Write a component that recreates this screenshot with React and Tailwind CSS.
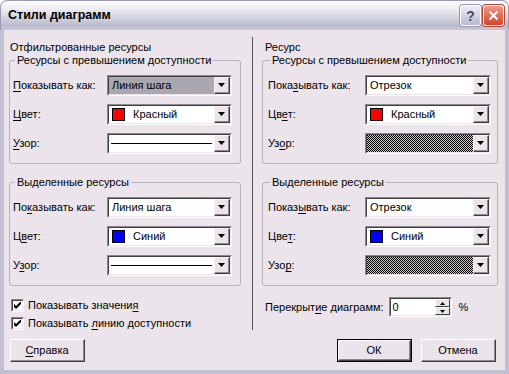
import React from 'react';

// classic dialog face of the screenshot (silver XP theme, unthemed controls)
const FACE = '#ebe4eb';

function Mn({ text, u }) {
    if (u == null) return text;
    return (
        <>
            {text.slice(0, u)}
            <span className="underline decoration-1 underline-offset-[2px]">{text[u]}</span>
            {text.slice(u + 1)}
        </>
    );
}

function DropBtn() {
    return (
        <div className="w-[16px] h-full flex border border-t-[#f7f3f7] border-l-[#f7f3f7] border-b-[#404040] border-r-[#404040] bg-[#ebe4eb]">
            <div className="flex-1 flex items-center justify-center border-b border-r border-[#8c8890]">
                <svg width="7" height="4" viewBox="0 0 7 4"><path d="M0 0H7L3.5 4Z" fill="#000" /></svg>
            </div>
        </div>
    );
}

function Combo({ w, bg = 'bg-white', children }) {
    return (
        <div className={`${w} h-[21px] flex shrink-0 border border-t-[#8c8890] border-l-[#8c8890] border-b-white border-r-white`}>
            <div className="flex flex-1 min-w-0 border border-t-[#404040] border-l-[#404040] border-b-[#ebe4eb] border-r-[#ebe4eb] bg-white">
                <div className={`flex-1 min-w-0 flex items-center ${bg}`}>{children}</div>
                <DropBtn />
            </div>
        </div>
    );
}

function Swatch({ color, name }) {
    return (
        <>
            <span className={`ml-[3px] w-[13px] h-[13px] border border-black ${color}`} />
            <span className="ml-[8px]">{name}</span>
        </>
    );
}

const Line = () => <div className="mx-[2px] h-px flex-1 bg-black" />;

let hatchId = 0;
function Hatch() {
    const id = `hatch${hatchId++}`;
    return (
        <svg className="flex-1 self-stretch" shapeRendering="crispEdges">
            <defs>
                <pattern id={id} width="2" height="2" patternUnits="userSpaceOnUse">
                    <rect width="2" height="2" fill="#cdc8d0" />
                    <rect width="1" height="1" fill="#000" />
                    <rect x="1" y="1" width="1" height="1" fill="#000" />
                </pattern>
            </defs>
            <rect width="100%" height="100%" fill={`url(#${id})`} />
        </svg>
    );
}

function Group({ title, rows, pad, cw }) {
    return (
        <fieldset className={`border border-[#b8b2bc] rounded-[3px] ${pad} pt-[8px] pb-[9px]`}>
            <legend className="ml-[2px] px-[2px] leading-[13px]">{title}</legend>
            <div className="flex flex-col gap-[8px]">
                {rows.map(([label, u, content, bg], i) => (
                    <div key={i} className="flex items-center justify-between">
                        <span><Mn text={label} u={u} /></span>
                        <Combo w={cw} bg={bg}>{content}</Combo>
                    </div>
                ))}
            </div>
        </fieldset>
    );
}

function CheckBox({ label, u }) {
    return (
        <div className="flex items-center h-[13px]">
            <div className="w-[13px] h-[13px] flex border border-t-[#8c8890] border-l-[#8c8890] border-b-white border-r-white">
                <div className="flex-1 flex items-center justify-center border border-t-[#404040] border-l-[#404040] border-b-[#ebe4eb] border-r-[#ebe4eb] bg-white">
                    <svg width="7" height="7" viewBox="0 0 7 7">
                        <path d="M0 2L2 4L7 -1V2L2 7L0 5Z" fill="#000" />
                    </svg>
                </div>
            </div>
            <span className="ml-[4px]"><Mn text={label} u={u} /></span>
        </div>
    );
}

function Button({ label, u, def }) {
    const body = (
        <div className="flex-1 flex border border-t-white border-l-white border-b-[#404040] border-r-[#404040]">
            <div className="flex-1 flex items-center justify-center border-b border-r border-[#8c8890] bg-[#ebe4eb]">
                <Mn text={label} u={u} />
            </div>
        </div>
    );
    return (
        <div className={`w-[75px] h-[23px] flex ${def ? 'border border-black' : ''}`}>{body}</div>
    );
}

function Spin() {
    const half = (d) => (
        <div className="flex-1 flex items-center justify-center border border-t-white border-l-white border-b-[#404040] border-r-[#404040] bg-[#ebe4eb]">
            <svg width="5" height="3" viewBox="0 0 5 3"><path d={d} fill="#000" /></svg>
        </div>
    );
    return (
        <div className="flex h-[20px] border border-t-[#8c8890] border-l-[#8c8890] border-b-white border-r-white">
            <div className="flex border border-t-[#404040] border-l-[#404040] border-b-[#ebe4eb] border-r-[#ebe4eb] bg-white">
                <div className="w-[44px] pl-[2px] flex items-center">0</div>
                <div className="w-[15px] flex flex-col">
                    {half('M2.5 0L5 3H0Z')}
                    {half('M0 0H5L2.5 3Z')}
                </div>
            </div>
        </div>
    );
}

export default function App() {
    const red = <Swatch color="bg-[#ff0000]" name="Красный" />;
    const blue = <Swatch color="bg-[#0000ff]" name="Синий" />;
    const txt = (t) => <span className="ml-[3px]">{t}</span>;

    return (
        <div className="w-[509px] h-[374px] flex flex-col text-[11px] text-black font-['Liberation_Sans',sans-serif] bg-white">
            {/* title bar */}
            <div className="h-[30px] shrink-0 flex items-center justify-between pl-[7px] pr-[4px] rounded-t-[7px] border border-b-0 border-[#9a9ab0] bg-[linear-gradient(#fdfdfe_0%,#eeeef4_25%,#d6d6e2_55%,#babace_85%,#c8c8d8_100%)]">
                <span className="font-bold text-[12.5px]">Стили диаграмм</span>
                <div className="flex gap-[2px]">
                    <div className="w-[21px] h-[21px] rounded-[3px] border border-white flex items-center justify-center bg-[linear-gradient(#eeeef6,#b8b8d0)] shadow-[0_0_0_1px_#9a9ab4]">
                        <span className="font-bold text-[14px] text-[#4a4a66] leading-none">?</span>
                    </div>
                    <div className="w-[21px] h-[21px] rounded-[3px] border border-white flex items-center justify-center bg-[linear-gradient(#f09a88,#d0442e)] shadow-[0_0_0_1px_#b04838]">
                        <svg width="11" height="11" viewBox="0 0 11 11">
                            <path d="M1.5 1.5L9.5 9.5M9.5 1.5L1.5 9.5" stroke="#fff" strokeWidth="2" />
                        </svg>
                    </div>
                </div>
            </div>

            {/* dialog body */}
            <div className="flex-1 flex flex-col border-x-[4px] border-b-[4px] border-[#c0c0d2] bg-[#ebe4eb] pt-[7px] pb-[8px]">
                <div className="h-[293px] flex">
                    {/* left column */}
                    <div className="w-[232px] ml-[5px] flex flex-col pt-[4px]">
                        <div className="pl-[1px] leading-[13px]">Отфильтрованные ресурсы</div>
                        <Group
                            title="Ресурсы с превышением доступности"
                            pad="pl-[3px] pr-[8px]"
                            cw="w-[125px]"
                            rows={[
                                ['Показывать как:', 0, txt('Линия шага'), 'bg-[#a9a7b0]'],
                                ['Цвет:', 0, red],
                                ['Узор:', 0, <Line />],
                            ]}
                        />
                        <div className="mt-[12px]">
                            <Group
                                title="Выделенные ресурсы"
                                pad="pl-[3px] pr-[8px]"
                                cw="w-[125px]"
                                rows={[
                                    ['Показывать как:', 2, txt('Линия шага')],
                                    ['Цвет:', 1, blue],
                                    ['Узор:', 1, <Line />],
                                ]}
                            />
                        </div>
                        <div className="mt-[13px] ml-[2px] flex flex-col gap-[5px]">
                            <CheckBox label="Показывать значения" u={18} />
                            <CheckBox label="Показывать линию доступности" u={11} />
                        </div>
                    </div>

                    {/* divider */}
                    <div className="ml-[11px] w-px bg-[#505050]" />

                    {/* right column */}
                    <div className="w-[236px] ml-[9px] flex flex-col pt-[4px]">
                        <div className="pl-[3px] leading-[13px]">Ресурс</div>
                        <Group
                            title="Ресурсы с превышением доступности"
                            pad="pl-[5px] pr-[6px]"
                            cw="w-[126px]"
                            rows={[
                                ['Показывать как:', 4, txt('Отрезок')],
                                ['Цвет:', 2, red],
                                ['Узор:', 2, <Hatch />],
                            ]}
                        />
                        <div className="mt-[12px]">
                            <Group
                                title="Выделенные ресурсы"
                                pad="pl-[5px] pr-[6px]"
                                cw="w-[126px]"
                                rows={[
                                    ['Показывать как:', 5, txt('Отрезок')],
                                    ['Цвет:', 3, blue],
                                    ['Узор:', 3, <Hatch />],
                                ]}
                            />
                        </div>
                        <div className="mt-[11px] ml-[3px] flex items-center">
                            <span><Mn text="Перекрытие диаграмм:" u={8} /></span>
                            <div className="ml-[5px]"><Spin /></div>
                            <span className="ml-[7px]">%</span>
                        </div>
                    </div>
                </div>

                {/* buttons */}
                <div className="mt-[9px] flex pl-[6px] pr-[9px]">
                    <Button label="Справка" u={0} />
                    <div className="flex-1" />
                    <Button label="ОК" def />
                    <div className="ml-[9px]"><Button label="Отмена" /></div>
                </div>
            </div>
        </div>
    );
}
